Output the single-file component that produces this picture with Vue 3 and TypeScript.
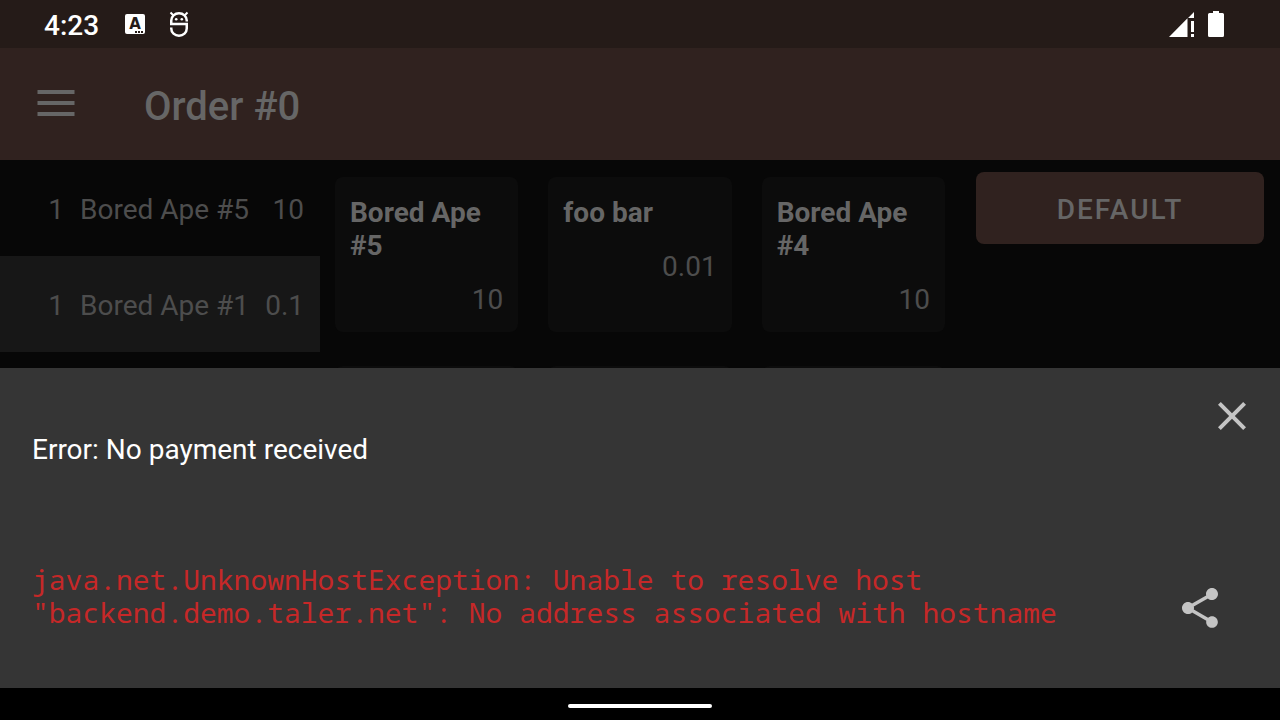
<script setup lang="ts">
interface OrderLine { id: number; quantity: number; name: string; price: string; selected: boolean }
interface Product { id: number; name: string; price: string }

const orderLines: OrderLine[] = [
  { id: 1, quantity: 1, name: 'Bored Ape #5', price: '10', selected: false },
  { id: 2, quantity: 1, name: 'Bored Ape #1', price: '0.1', selected: true },
]

const products: Product[] = [
  { id: 1, name: 'Bored Ape #5', price: '10' },
  { id: 2, name: 'foo bar', price: '0.01' },
  { id: 3, name: 'Bored Ape #4', price: '10' },
]
</script>

<template>
  <div class="screen">
    <div class="status-bar">
      <span class="clock">4:23</span>
      <svg class="status-icon keyboard" viewBox="0 0 20 20" aria-hidden="true">
        <rect width="20" height="20" rx="2" fill="#fff" />
        <text x="10" y="15" text-anchor="middle" class="keyboard-letter">A</text>
        <path d="M10 17h2v2h-2zM13 17h2v2h-2zM16 17h2v2h-2z" fill="#251b18" />
      </svg>
      <svg class="status-icon mascot" viewBox="0 0 20 26" aria-hidden="true">
        <g fill="none" stroke="#fff" stroke-width="2.500">
          <path d="M17.750 10.500V9.500A7.750 7.250 0 0 0 2.250 9.500V13H17.750V17.500A7.750 7.250 0 0 1 2.250 17.500V16.500" />
          <path d="M1.500 1.500L5 5M18.500 1.500L15 5" stroke-width="2" />
        </g>
        <circle cx="7.200" cy="8.200" r="1.300" fill="#fff" />
        <circle cx="12.800" cy="8.200" r="1.300" fill="#fff" />
      </svg>
      <span class="spacer"></span>
      <svg class="status-icon signal" viewBox="0 0 26 26" aria-hidden="true">
        <path d="M0 26L18.500 7.300V26zM19 7L25 1V7zM22 10h3v11h-3zM22 23h3v3h-3z" fill="#fff" />
      </svg>
      <svg class="status-icon battery" viewBox="0 0 16 26" aria-hidden="true">
        <path d="M5 0h6v2h3.500a1.500 1.500 0 0 1 1.500 1.500v21a1.500 1.500 0 0 1-1.500 1.500h-13A1.500 1.500 0 0 1 0 24.500v-21A1.500 1.500 0 0 1 1.500 2H5z" fill="#fff" />
      </svg>
    </div>

    <header class="toolbar">
      <button class="icon-button" type="button" aria-label="Open menu">
        <svg class="menu-icon" viewBox="0 0 38 28" aria-hidden="true">
          <path d="M0.500 0h37v4h-37zM0.500 11h37v4h-37zM0.500 22h37v4h-37z" fill="#666" />
        </svg>
      </button>
      <h1 class="title">Order #0</h1>
    </header>

    <main class="content">
      <ul class="order">
        <li v-for="line in orderLines" :key="line.id" class="line" :class="{ selected: line.selected }">
          <span class="quantity">{{ line.quantity }}</span>
          <span class="name">{{ line.name }}</span>
          <span class="price">{{ line.price }}</span>
        </li>
      </ul>
      <section class="products">
        <button v-for="product in products" :key="product.id" class="card" type="button">
          <span class="card-name">{{ product.name }}</span>
          <span class="card-price">{{ product.price }}</span>
        </button>
        <div class="card"></div>
        <div class="card"></div>
        <div class="card"></div>
      </section>
      <nav class="categories">
        <button class="category" type="button">DEFAULT</button>
      </nav>
    </main>

    <section class="sheet" role="alertdialog" aria-labelledby="error-title">
      <div class="sheet-top">
        <p id="error-title" class="error-title">Error: No payment received</p>
        <button class="icon-button" type="button" aria-label="Close">
          <svg class="action-icon" viewBox="0 0 24 24" aria-hidden="true">
            <path d="M19 6.410L17.590 5 12 10.590 6.410 5 5 6.410 10.590 12 5 17.590 6.410 19 12 13.410 17.590 19 19 17.590 13.410 12z" fill="#c4c4c4" />
          </svg>
        </button>
      </div>
      <div class="sheet-bottom">
        <p class="error-detail">java.net.UnknownHostException: Unable to resolve host "backend.demo.taler.net": No address associated with hostname</p>
        <button class="icon-button" type="button" aria-label="Share">
          <svg class="action-icon" viewBox="0 0 24 24" aria-hidden="true">
            <path d="M18 16.080c-.76 0-1.440.3-1.960.77L8.910 12.700c.05-.23.09-.46.09-.7s-.04-.47-.09-.7l7.050-4.110c.54.5 1.250.81 2.040.81 1.660 0 3-1.340 3-3s-1.340-3-3-3-3 1.340-3 3c0 .24.04.47.09.7L8.040 9.810C7.500 9.310 6.790 9 6 9c-1.660 0-3 1.340-3 3s1.340 3 3 3c.79 0 1.500-.31 2.040-.81l7.120 4.160c-.05.21-.08.43-.08.65 0 1.610 1.310 2.920 2.920 2.920s2.920-1.310 2.920-2.920-1.310-2.920-2.920-2.920z" fill="#c4c4c4" />
          </svg>
        </button>
      </div>
    </section>

    <div class="gesture-bar"><span class="handle"></span></div>
  </div>
</template>

<style>
body {
  margin: 0;
  background: #000;
}
</style>

<style scoped>
.screen {
  display: flex;
  flex-direction: column;
  height: 100vh;
  font-family: Roboto, "Liberation Sans", sans-serif;
  font-size: 28px;
  line-height: 33px;
  color: #4d4d4d;
  background: #000;
}

button {
  font: inherit;
  border: 0;
  cursor: pointer;
}

.status-bar {
  display: flex;
  align-items: center;
  flex: none;
  height: 48px;
  padding: 0 56px 0 44px;
  background: #251b18;
  box-sizing: border-box;
}

.clock {
  color: #fff;
  font-weight: 500;
  padding-top: 2px;
}

.status-icon {
  display: block;
  flex: none;
}

.keyboard {
  width: 20px;
  height: 20px;
  margin-left: 26px;
}

.keyboard-letter {
  font-family: "DejaVu Sans", sans-serif;
  font-size: 15px;
  font-weight: 700;
  fill: #251b18;
}

.mascot {
  width: 20px;
  height: 26px;
  margin-left: 24px;
}

.spacer {
  flex: 1;
}

.signal {
  width: 26px;
  height: 26px;
  margin-right: 13px;
}

.battery {
  width: 16px;
  height: 26px;
}

.toolbar {
  display: flex;
  align-items: center;
  flex: none;
  gap: 56px;
  height: 112px;
  padding: 0 24px;
  background: #30221f;
  box-sizing: border-box;
}

.icon-button {
  display: flex;
  align-items: center;
  justify-content: center;
  flex: none;
  width: 64px;
  height: 64px;
  padding: 0;
  background: none;
}

.menu-icon {
  width: 38px;
  height: 28px;
}

.title {
  margin: 0;
  padding-top: 6px;
  font-size: 40px;
  line-height: 48px;
  font-weight: 500;
  color: #666;
}

.content {
  display: grid;
  grid-template-columns: 1fr 2fr 1fr;
  flex: 1;
  min-height: 0;
  overflow: hidden;
  background: #070707;
}

.order {
  margin: 0;
  padding: 0;
  list-style: none;
}

.line {
  display: flex;
  align-items: center;
  gap: 16px;
  height: 96px;
  padding: 2px 16px 0 32px;
  box-sizing: border-box;
}

.line.selected {
  background: #171717;
}

.quantity {
  width: 32px;
  text-align: right;
}

.name {
  flex: 1;
  white-space: nowrap;
}

.products {
  display: grid;
  grid-template-columns: repeat(3, 1fr);
  grid-auto-rows: min-content;
  gap: 34px 30px;
  padding: 17px 15px;
}

.card {
  display: flex;
  flex-direction: column;
  gap: 21px;
  min-height: 155px;
  padding: 19px 15px 16px;
  text-align: left;
  color: #4d4d4d;
  background: #0c0c0c;
  border-radius: 8px;
  box-sizing: border-box;
}

.card-name {
  font-weight: 700;
  color: #666;
}

.card-price {
  align-self: flex-end;
}

.categories {
  padding: 12px 16px;
}

.category {
  width: 100%;
  height: 72px;
  padding: 2px 0 0;
  font-weight: 500;
  letter-spacing: 2px;
  color: #666;
  background: #30221f;
  border-radius: 8px;
}

.sheet {
  display: flex;
  flex-direction: column;
  justify-content: space-between;
  flex: none;
  min-height: 320px;
  padding: 16px 16px 48px 32px;
  background: #353535;
  box-sizing: border-box;
}

.sheet-top,
.sheet-bottom {
  display: flex;
  justify-content: space-between;
  gap: 32px;
}

.sheet-bottom {
  padding-right: 32px;
}

.error-title {
  margin: 0;
  padding-top: 49px;
  color: #fff;
}

.error-detail {
  margin: 0;
  padding-bottom: 11px;
  font-family: "Noto Sans Mono", "DejaVu Sans Mono", monospace;
  color: #c62828;
}

.sheet-bottom .icon-button {
  align-self: flex-end;
}

.action-icon {
  width: 48px;
  height: 48px;
}

.gesture-bar {
  display: flex;
  align-items: center;
  justify-content: center;
  flex: none;
  height: 32px;
  padding-top: 4px;
  box-sizing: border-box;
}

.handle {
  width: 144px;
  height: 4px;
  border-radius: 2px;
  background: #fff;
}
</style>
